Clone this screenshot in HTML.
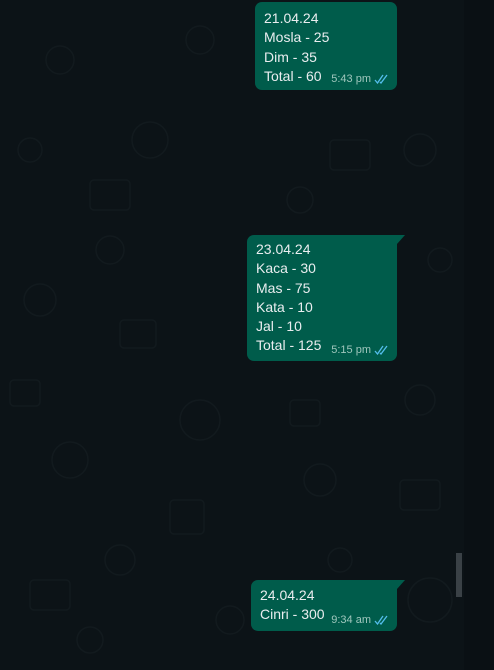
<!DOCTYPE html>
<html><head><style>
body{margin:0;width:494px;height:670px;background:#0c1317;position:relative;overflow:hidden;font-family:"Liberation Sans",sans-serif;}
.strip{position:absolute;left:464px;top:0;width:30px;height:670px;background:#0a1014;}
.b{position:absolute;background:#005c4b;color:#e9edef;border-radius:7px;font-size:14px;line-height:19.3px;padding:6px 9px 8px 9px;box-sizing:border-box;}
.b.t{border-top-right-radius:0;}
.b.t:after{content:"";position:absolute;right:-8px;top:0;border-top:9px solid #005c4b;border-right:8px solid transparent;}
.tm{position:absolute;right:8px;bottom:1px;font-size:11px;color:#9fc7bd;}
.tm svg{vertical-align:-2px;margin-left:3px}
.sb{position:absolute;left:456px;top:553px;width:6px;height:44px;background:#3a4146;}
.pat{position:absolute;left:0;top:0;width:464px;height:670px;opacity:.45}
</style></head><body>
<svg class="pat" width="464" height="670"><g fill="none" stroke="#1b2428" stroke-width="1.5">
<circle cx="60" cy="60" r="14"/><circle cx="150" cy="140" r="18"/><rect x="90" y="180" width="40" height="30" rx="4"/><circle cx="40" cy="300" r="16"/><rect x="120" y="320" width="36" height="28" rx="4"/><circle cx="200" cy="420" r="20"/><circle cx="70" cy="460" r="18"/><rect x="170" y="500" width="34" height="34" rx="4"/><circle cx="320" cy="480" r="16"/><circle cx="430" cy="600" r="22"/><rect x="30" y="580" width="40" height="30" rx="4"/><circle cx="230" cy="620" r="14"/><circle cx="420" cy="150" r="16"/><rect x="330" y="140" width="40" height="30" rx="4"/><circle cx="200" cy="40" r="14"/><circle cx="420" cy="400" r="15"/>
<circle cx="30" cy="150" r="12"/><circle cx="110" cy="250" r="14"/><rect x="10" y="380" width="30" height="26" rx="4"/><circle cx="120" cy="560" r="15"/><circle cx="300" cy="200" r="13"/><circle cx="440" cy="260" r="12"/><rect x="290" y="400" width="30" height="26" rx="4"/><circle cx="90" cy="640" r="13"/><circle cx="340" cy="560" r="12"/><rect x="400" y="480" width="40" height="30" rx="4"/>
</g></svg>
<div class="strip"></div>
<div class="b" style="left:255px;top:2px;width:142px;height:88px;padding-top:7px">21.04.24<br>Mosla - 25<br>Dim - 35<br>Total - 60<span class="tm">5:43 pm<svg width="15" height="10" viewBox="0 0 15 10"><path d="M1 6l2.5 3L9 1M6 8l1 1L13 1" fill="none" stroke="#53bdeb" stroke-width="1.3"/></svg></span></div>
<div class="b t" style="left:247px;top:235px;width:150px;height:126px;padding-top:5px">23.04.24<br>Kaca - 30<br>Mas - 75<br>Kata - 10<br>Jal - 10<br>Total - 125<span class="tm">5:15 pm<svg width="15" height="10" viewBox="0 0 15 10"><path d="M1 6l2.5 3L9 1M6 8l1 1L13 1" fill="none" stroke="#53bdeb" stroke-width="1.3"/></svg></span></div>
<div class="b t" style="left:251px;top:580px;width:146px;height:51px;padding-top:6px">24.04.24<br>Cinri - 300<span class="tm">9:34 am<svg width="15" height="10" viewBox="0 0 15 10"><path d="M1 6l2.5 3L9 1M6 8l1 1L13 1" fill="none" stroke="#53bdeb" stroke-width="1.3"/></svg></span></div>
<div class="sb"></div>
</body></html>
